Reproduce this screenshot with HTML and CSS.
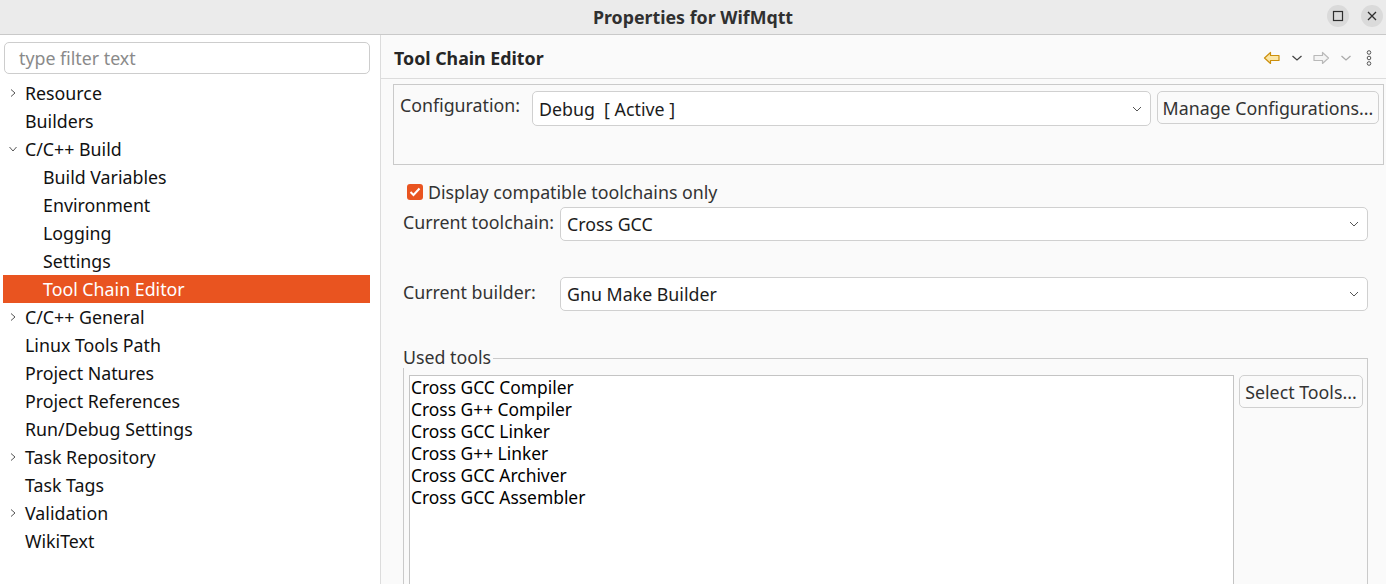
FILE: index.html
```html
<!DOCTYPE html>
<html>
<head>
<meta charset="utf-8">
<link rel="stylesheet" href="styles.css">
</head>
<body>
<div class="window">
  <div class="titlebar">
    <div class="title">Properties for WifMqtt</div>
    <div class="winbtns">
      <div class="winbtn"><svg width="12" height="12" viewBox="0 0 12 12"><rect x="1.5" y="1.5" width="9" height="9" fill="none" stroke="#2e2e2e" stroke-width="1.2"/></svg></div>
      <div class="winbtn"><svg width="12" height="12" viewBox="0 0 12 12"><path d="M2 2 L10 10 M10 2 L2 10" stroke="#2e2e2e" stroke-width="1.3"/></svg></div>
    </div>
  </div>
  <div class="main">
    <div class="sidebar">
      <div class="filter">type filter text</div>
      <ul class="tree">
        <li class="row"><span class="tw"><svg width="8" height="10" viewBox="0 0 8 10"><path d="M2 1.5 L6 5 L2 8.5" fill="none" stroke="#555" stroke-width="1"/></svg></span>Resource</li>
        <li class="row"><span class="tw"></span>Builders</li>
        <li class="row"><span class="tw"><svg width="10" height="8" viewBox="0 0 10 8"><path d="M1.5 2 L5 6 L8.5 2" fill="none" stroke="#555" stroke-width="1"/></svg></span>C/C++ Build</li>
        <li class="row child"><span class="tw"></span>Build Variables</li>
        <li class="row child"><span class="tw"></span>Environment</li>
        <li class="row child"><span class="tw"></span>Logging</li>
        <li class="row child"><span class="tw"></span>Settings</li>
        <li class="row child selected"><span class="tw"></span>Tool Chain Editor</li>
        <li class="row"><span class="tw"><svg width="8" height="10" viewBox="0 0 8 10"><path d="M2 1.5 L6 5 L2 8.5" fill="none" stroke="#555" stroke-width="1"/></svg></span>C/C++ General</li>
        <li class="row"><span class="tw"></span>Linux Tools Path</li>
        <li class="row"><span class="tw"></span>Project Natures</li>
        <li class="row"><span class="tw"></span>Project References</li>
        <li class="row"><span class="tw"></span>Run/Debug Settings</li>
        <li class="row"><span class="tw"><svg width="8" height="10" viewBox="0 0 8 10"><path d="M2 1.5 L6 5 L2 8.5" fill="none" stroke="#555" stroke-width="1"/></svg></span>Task Repository</li>
        <li class="row"><span class="tw"></span>Task Tags</li>
        <li class="row"><span class="tw"><svg width="8" height="10" viewBox="0 0 8 10"><path d="M2 1.5 L6 5 L2 8.5" fill="none" stroke="#555" stroke-width="1"/></svg></span>Validation</li>
        <li class="row"><span class="tw"></span>WikiText</li>
      </ul>
    </div>
    <div class="content">
      <div class="header">
        <div class="htitle">Tool Chain Editor</div>
        <div class="htools">
          <svg class="ico" width="18" height="14" viewBox="0 0 18 14"><path d="M1.5 7 L7.5 1.5 L7.5 4.5 L16 4.5 L16 9.5 L7.5 9.5 L7.5 12.5 Z" fill="#fbe6a6" stroke="#cc8f0c" stroke-width="1.2" stroke-linejoin="round"/></svg>
          <svg class="ico dd" width="12" height="8" viewBox="0 0 12 8"><path d="M1.5 2 L6 6 L10.5 2" fill="none" stroke="#444" stroke-width="1.3"/></svg>
          <svg class="ico" width="18" height="14" viewBox="0 0 18 14"><path d="M16.5 7 L10.5 1.5 L10.5 4.5 L2 4.5 L2 9.5 L10.5 9.5 L10.5 12.5 Z" fill="#f4f4f4" stroke="#b9b9b9" stroke-width="1.2" stroke-linejoin="round"/></svg>
          <svg class="ico dd" width="12" height="8" viewBox="0 0 12 8"><path d="M1.5 2 L6 6 L10.5 2" fill="none" stroke="#aaa" stroke-width="1.3"/></svg>
          <svg class="ico menu" width="6" height="16" viewBox="0 0 6 16"><circle cx="3" cy="2.5" r="1.8" fill="none" stroke="#555" stroke-width="1"/><circle cx="3" cy="8" r="1.8" fill="none" stroke="#555" stroke-width="1"/><circle cx="3" cy="13.5" r="1.8" fill="none" stroke="#555" stroke-width="1"/></svg>
        </div>
      </div>
      <div class="body">
        <div class="confgroup">
          <div class="conflabel">Configuration:</div>
          <div class="combo conf"><span>Debug&nbsp; [ Active ]</span><svg width="10" height="6" viewBox="0 0 10 6"><path d="M1 1 L5 5 L9 1" fill="none" stroke="#555" stroke-width="1"/></svg></div>
          <div class="button manage">Manage Configurations...</div>
        </div>
        <div class="checkrow">
          <span class="checkbox"><svg width="12" height="10" viewBox="0 0 12 10"><path d="M1.5 5 L4.5 8 L10.5 1.5" fill="none" stroke="#fff" stroke-width="2"/></svg></span>
          <span>Display compatible toolchains only</span>
        </div>
        <div class="field tc">
          <div class="flabel">Current toolchain:</div>
          <div class="combo wide"><span>Cross GCC</span><svg width="10" height="6" viewBox="0 0 10 6"><path d="M1 1 L5 5 L9 1" fill="none" stroke="#555" stroke-width="1"/></svg></div>
        </div>
        <div class="field cb">
          <div class="flabel">Current builder:</div>
          <div class="combo wide"><span>Gnu Make Builder</span><svg width="10" height="6" viewBox="0 0 10 6"><path d="M1 1 L5 5 L9 1" fill="none" stroke="#555" stroke-width="1"/></svg></div>
        </div>
        <div class="toolsgroup">
          <div class="legend">Used tools</div>
          <div class="toolsinner">
            <ul class="toollist">
              <li>Cross GCC Compiler</li>
              <li>Cross G++ Compiler</li>
              <li>Cross GCC Linker</li>
              <li>Cross G++ Linker</li>
              <li>Cross GCC Archiver</li>
              <li>Cross GCC Assembler</li>
            </ul>
            <div class="button select">Select Tools...</div>
          </div>
        </div>
      </div>
    </div>
  </div>
</div>
</body>
</html>
```

FILE: styles.css
```css
* { box-sizing: border-box; }
html, body { margin: 0; padding: 0; }
body {
  width: 1386px;
  height: 584px;
  overflow: hidden;
  font-family: "Noto Sans", "DejaVu Sans", sans-serif;
  font-size: 17.8px;
  color: #000;
  background: #fafafa;
}
.window { width: 1386px; height: 584px; display: flex; flex-direction: column; }

.titlebar {
  height: 35px;
  flex: none;
  background: #ebebeb;
  border-bottom: 1px solid #c9c9c9;
  display: flex;
  align-items: center;
  justify-content: center;
  position: relative;
}
.title { font-weight: bold; color: #303030; font-size: 17.8px; }
.winbtns {
  position: absolute;
  right: 3px;
  top: 5px;
  display: flex;
  gap: 12px;
}
.winbtn {
  width: 22px; height: 22px; border-radius: 50%;
  background: #dadada;
  display: flex; align-items: center; justify-content: center;
}

.main { flex: 1; display: flex; min-height: 0; }

.sidebar {
  width: 381px;
  flex: none;
  background: #fff;
  border-right: 1px solid #dcdcdc;
  padding: 7px 10px 0 3px;
}
.filter {
  margin-left: 1px;
  height: 32px;
  border: 1px solid #cdcdcd;
  border-radius: 5px;
  color: #8a8a8a;
  padding-left: 14px;
  line-height: 30px;
}
.tree { list-style: none; margin: 5px 0 0 0; padding: 0; }
.row {
  height: 28px;
  display: flex;
  align-items: center;
  color: #111;
  white-space: nowrap;
}
.tw { width: 22px; flex: none; display: flex; align-items: center; justify-content: center; padding-left: 2px; padding-right: 4px; }
.row.child { padding-left: 18px; }
.row.selected { background: #e95420; color: #fff; }

.content { flex: 1; display: flex; flex-direction: column; background: #fafafa; min-width: 0; }
.header {
  flex: none;
  height: 44px;
  border-bottom: 1px solid #dcdcdc;
  display: flex;
  align-items: center;
  justify-content: space-between;
  padding: 3px 14px 0 13px;
}
.htitle { font-weight: bold; color: #262626; }
.htools { display: flex; align-items: center; }
.ico { display: block; }
.htools .dd { margin: 0 9px 0 10px; }
.htools .dd:nth-child(4) { margin-right: 14px; }

.body { padding: 5px 2px 0 12px; flex: 1; display: flex; flex-direction: column; color: #333; min-height: 0; }

.confgroup {
  flex: none;
  height: 81px;
  border: 1px solid #cacaca;
  display: flex;
  align-items: flex-start;
  padding: 6px 5px 0 6px;
}
.conflabel { width: 132px; flex: none; line-height: 24px; padding-top: 2px; }
.combo {
  height: 35px;
  background: #fff;
  border: 1px solid #d0d0d0;
  border-radius: 5px;
  display: flex;
  align-items: center;
  justify-content: space-between;
  padding: 0 8px 0 6px;
  color: #1c1c1c;
  white-space: nowrap;
}
.combo.conf { width: 619px; flex: none; }
.button {
  border: 1px solid #d0d0d0;
  border-radius: 5px;
  background: #fafafa;
  height: 33px;
  display: flex;
  align-items: center;
  justify-content: center;
  color: #333;
  white-space: nowrap;
  flex: none;
}
.button.manage { width: 222px; margin-left: 6px; }

.checkrow { flex: none; display: flex; align-items: center; margin-top: 18px; padding-left: 14px; height: 17px; }
.checkbox {
  width: 16px; height: 16px; border-radius: 3px;
  background: #e95420;
  display: flex; align-items: center; justify-content: center;
  margin-right: 5px;
}

.field { flex: none; display: flex; align-items: center; padding-left: 10px; padding-right: 16px; }
.field.tc { margin-top: 7px; }
.field.cb { margin-top: 36px; }
.flabel { width: 157px; flex: none; margin-bottom: 5px; }
.combo.wide { flex: 1; height: 34px; }

.toolsgroup { flex: 1; margin: 47px 16px 0 10px; position: relative; border: 1px solid #cacaca; border-bottom: none; }
.legend { position: absolute; top: -13px; left: -1px; background: #fafafa; padding-right: 2px; line-height: 22px; color: #333; }
.toolsinner { display: flex; align-items: flex-start; padding: 16px 5px 0 5px; height: 100%; }
.toollist {
  list-style: none; margin: 0; padding: 0 0 0 1px;
  width: 825px; height: 230px;
  flex: none;
  background: #fff;
  border: 1px solid #c4c4c4;
  border-bottom: none;
  color: #000;
  font-size: 17.4px;
}
.toollist li { height: 22px; line-height: 22px; white-space: nowrap; }
.button.select { width: 124px; margin-left: 5px; }
```
